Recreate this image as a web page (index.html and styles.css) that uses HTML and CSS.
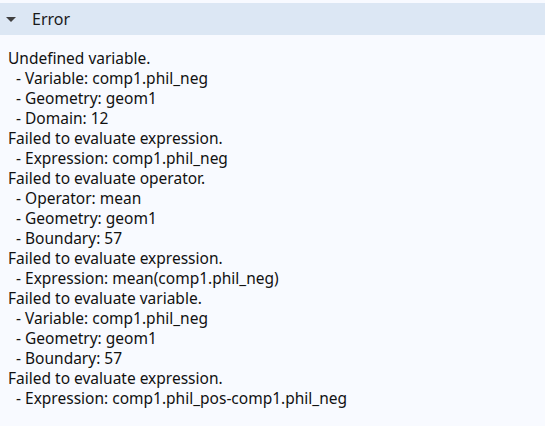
FILE: index.html
```html
<!DOCTYPE html>
<html>
<head>
<meta charset="utf-8">
<link rel="stylesheet" href="styles.css">
</head>
<body>
<div class="panel">
  <div class="header">
    <svg class="caret" width="10" height="5" viewBox="0 0 10 5"><path d="M0 0H10L5 5Z" fill="#404040"/></svg>
    <span class="title">Error</span>
  </div>
  <div class="content">
    <div class="line">Undefined variable.</div>
    <div class="line sub">- Variable: comp1.phil_neg</div>
    <div class="line sub">- Geometry: geom1</div>
    <div class="line sub">- Domain: 12</div>
    <div class="line">Failed to evaluate expression.</div>
    <div class="line sub">- Expression: comp1.phil_neg</div>
    <div class="line">Failed to evaluate operator.</div>
    <div class="line sub">- Operator: mean</div>
    <div class="line sub">- Geometry: geom1</div>
    <div class="line sub">- Boundary: 57</div>
    <div class="line">Failed to evaluate expression.</div>
    <div class="line sub">- Expression: mean(comp1.phil_neg)</div>
    <div class="line">Failed to evaluate variable.</div>
    <div class="line sub">- Variable: comp1.phil_neg</div>
    <div class="line sub">- Geometry: geom1</div>
    <div class="line sub">- Boundary: 57</div>
    <div class="line">Failed to evaluate expression.</div>
    <div class="line sub">- Expression: comp1.phil_pos-comp1.phil_neg</div>
  </div>
</div>
</body>
</html>
```

FILE: styles.css
```css
html, body {
  margin: 0;
  padding: 0;
  background: #f8faff;
  height: 100%;
}
.panel {
  padding-top: 3px;
  font-family: "Noto Sans", "Open Sans", sans-serif;
  color: #111;
}
.header {
  height: 32px;
  background: #dce7f4;
  display: flex;
  align-items: center;
  padding-left: 6px;
}
.caret {
  margin-right: 16px;
}
.title {
  font-size: 16px;
  color: #1a1a1a;
}
.content {
  padding: 13px 8px 0 8px;
  font-size: 15.5px;
  line-height: 20px;
}
.sub {
  padding-left: 8px;
}
```
